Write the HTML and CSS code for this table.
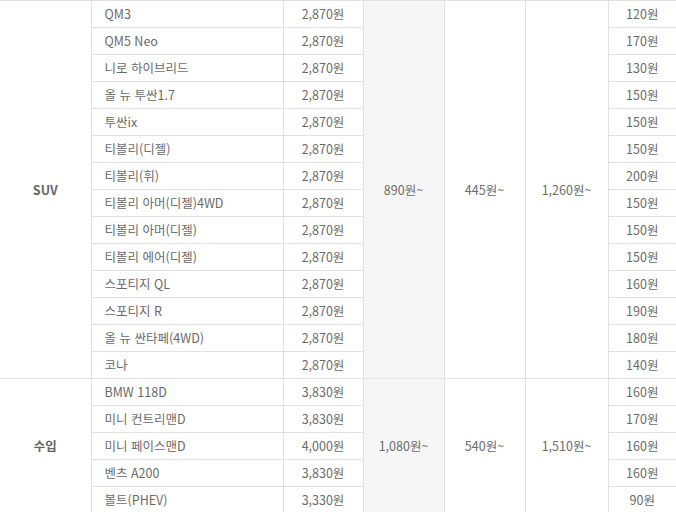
FILE: index.html
```html
<!DOCTYPE html>
<html lang="ko">
<head>
<meta charset="utf-8">
<link rel="stylesheet" href="styles.css">
</head>
<body>
<table class="fare">
  <colgroup>
    <col class="c-cat"><col class="c-model"><col class="c-price"><col class="c-a"><col class="c-b"><col class="c-c"><col class="c-km">
  </colgroup>
  <tbody>
    <tr><td class="cat" rowspan="14">SUV</td><td class="model">QM3</td><td>2,870원</td><td class="shade" rowspan="14">890원~</td><td rowspan="14">445원~</td><td rowspan="14">1,260원~</td><td class="km">120원</td></tr>
    <tr><td class="model">QM5 Neo</td><td>2,870원</td><td class="km">170원</td></tr>
    <tr><td class="model">니로 하이브리드</td><td>2,870원</td><td class="km">130원</td></tr>
    <tr><td class="model">올 뉴 투싼1.7</td><td>2,870원</td><td class="km">150원</td></tr>
    <tr><td class="model">투싼ix</td><td>2,870원</td><td class="km">150원</td></tr>
    <tr><td class="model">티볼리(디젤)</td><td>2,870원</td><td class="km">150원</td></tr>
    <tr><td class="model">티볼리(휘)</td><td>2,870원</td><td class="km">200원</td></tr>
    <tr><td class="model">티볼리 아머(디젤)4WD</td><td>2,870원</td><td class="km">150원</td></tr>
    <tr><td class="model">티볼리 아머(디젤)</td><td>2,870원</td><td class="km">150원</td></tr>
    <tr><td class="model">티볼리 에어(디젤)</td><td>2,870원</td><td class="km">150원</td></tr>
    <tr><td class="model">스포티지 QL</td><td>2,870원</td><td class="km">160원</td></tr>
    <tr><td class="model">스포티지 R</td><td>2,870원</td><td class="km">190원</td></tr>
    <tr><td class="model">올 뉴 싼타페(4WD)</td><td>2,870원</td><td class="km">180원</td></tr>
    <tr><td class="model">코나</td><td>2,870원</td><td class="km">140원</td></tr>
    <tr><td class="cat" rowspan="5">수입</td><td class="model">BMW 118D</td><td>3,830원</td><td class="shade" rowspan="5">1,080원~</td><td rowspan="5">540원~</td><td rowspan="5">1,510원~</td><td class="km">160원</td></tr>
    <tr><td class="model">미니 컨트리맨D</td><td>3,830원</td><td class="km">170원</td></tr>
    <tr><td class="model">미니 페이스맨D</td><td>4,000원</td><td class="km">160원</td></tr>
    <tr><td class="model">벤츠 A200</td><td>3,830원</td><td class="km">160원</td></tr>
    <tr><td class="model">볼트(PHEV)</td><td>3,330원</td><td class="km">90원</td></tr>
  </tbody>
</table>
</body>
</html>
```
FILE: styles.css
```css
html, body {
  margin: 0;
  padding: 0;
  background: #fff;
}
.fare {
  width: 676px;
  table-layout: fixed;
  border-collapse: collapse;
  font-family: "Noto Sans CJK KR", "Noto Sans", sans-serif;
  font-size: 12.5px;
  color: #6b6b6b;
}
.c-cat { width: 91px; }
.c-model { width: 192px; }
.c-price { width: 80px; }
.c-a { width: 81px; }
.c-b { width: 81px; }
.c-c { width: 83px; }
.c-km { width: 68px; }
.fare td {
  height: 26px;
  padding: 0;
  border: 1px solid #e2e2e2;
  text-align: center;
  vertical-align: middle;
  line-height: 26px;
  white-space: nowrap;
}
.fare td.cat {
  border-left: none;
  font-weight: bold;
  color: #666;
}
.fare td.km {
  border-right: none;
}
.fare td.model {
  text-align: left;
  padding-left: 13px;
}
.fare td.shade {
  background: #f6f6f6;
}
```
